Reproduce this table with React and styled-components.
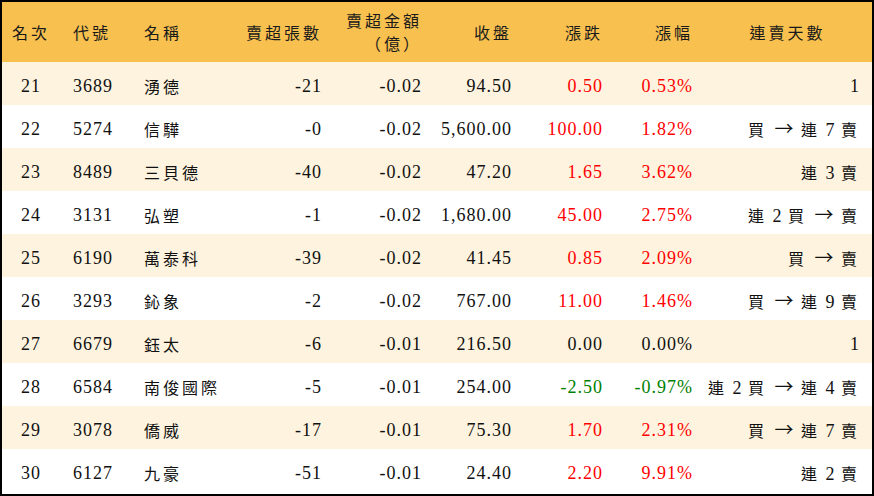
import React from "react";
import styled, { createGlobalStyle } from "styled-components";

const Global = createGlobalStyle`
  html, body { margin: 0; padding: 0; background: #fff; }
  #root { width: 874px; height: 496px; }
`;

const COLS = "58px 70px 100px 103px 100px 90px 90px 90px 169px";

const Board = styled.div`
  box-sizing: border-box;
  width: 874px;
  height: 496px;
  border: 2px solid #000;
  background: #fff;
  font-family: "Liberation Serif", "Noto Sans CJK TC", serif;
  font-size: 18px;
  letter-spacing: 1px;
  color: #111;
  display: flex;
  flex-direction: column;
`;

const HeadRow = styled.div`
  display: grid;
  grid-template-columns: ${COLS};
  height: 60px;
  background: #f7c04f;
`;

const Row = styled.div`
  display: grid;
  grid-template-columns: ${COLS};
  height: 43px;
  box-sizing: border-box;
  padding-top: 5px;
  background: ${(p) => (p.$shade ? "#fdf3de" : "#ffffff")};
  &:first-of-type {
    height: 45px;
    padding-top: 7px;
  }
`;

const justify = { left: "flex-start", center: "center", right: "flex-end" };

const HeadCell = styled.div`
  display: flex;
  flex-direction: column;
  justify-content: center;
  align-items: ${(p) => justify[p.$align]};
  text-align: ${(p) => p.$align};
  padding-left: ${(p) => p.$pl || 0}px;
  padding-right: ${(p) => p.$pr || 0}px;
  line-height: 23px;
  font-family: "Noto Sans CJK TC", serif;
  font-size: 16px;
  letter-spacing: 3px;
  color: #1a1a1a;
  white-space: nowrap;
  & > span { display: block; }
`;

const Cell = styled.div`
  display: flex;
  align-items: center;
  justify-content: ${(p) => justify[p.$align]};
  padding-left: ${(p) => p.$pl || 0}px;
  padding-right: ${(p) => p.$pr || 0}px;
  color: ${(p) => p.$tone || "#111"};
  white-space: pre;
`;

const Cjk = styled.span`
  font-family: "Noto Sans CJK TC", serif;
  font-size: 16px;
  letter-spacing: 3px;
`;

const Arrow = styled.span`
  font-family: "Noto Sans CJK TC", sans-serif;
  font-size: 19px;
  line-height: 1;
  letter-spacing: 0;
  margin: 0 2px;
`;

const Streak = styled.span`
  white-space: pre;
`;

const cols = [
  { key: "rank", align: "center" },
  { key: "code", align: "left", pl: 13 },
  { key: "name", align: "left", pl: 14 },
  { key: "vol", align: "right", pr: 11 },
  { key: "amt", align: "right", pr: 11 },
  { key: "close", align: "right", pr: 11 },
  { key: "chg", align: "right", pr: 10 },
  { key: "pct", align: "right", pr: 10 },
  { key: "days", align: "right", pr: 12, headAlign: "center" },
];

const heads = [
  ["名次"],
  ["代號"],
  ["名稱"],
  ["賣超張數"],
  ["賣超金額", "（億）"],
  ["收盤"],
  ["漲跌"],
  ["漲幅"],
  ["連賣天數"],
];

const data = [
  ["21", "3689", "湧德", "-21", "-0.02", "94.50", "0.50", "0.53%", "1"],
  ["22", "5274", "信驊", "-0", "-0.02", "5,600.00", "100.00", "1.82%", "買 → 連 7 賣"],
  ["23", "8489", "三貝德", "-40", "-0.02", "47.20", "1.65", "3.62%", "連 3 賣"],
  ["24", "3131", "弘塑", "-1", "-0.02", "1,680.00", "45.00", "2.75%", "連 2 買 → 賣"],
  ["25", "6190", "萬泰科", "-39", "-0.02", "41.45", "0.85", "2.09%", "買 → 賣"],
  ["26", "3293", "鈊象", "-2", "-0.02", "767.00", "11.00", "1.46%", "買 → 連 9 賣"],
  ["27", "6679", "鈺太", "-6", "-0.01", "216.50", "0.00", "0.00%", "1"],
  ["28", "6584", "南俊國際", "-5", "-0.01", "254.00", "-2.50", "-0.97%", "連 2 買 → 連 4 賣"],
  ["29", "3078", "僑威", "-17", "-0.01", "75.30", "1.70", "2.31%", "買 → 連 7 賣"],
  ["30", "6127", "九豪", "-51", "-0.01", "24.40", "2.20", "9.91%", "連 2 賣"],
];

const toneFor = (v) => {
  const n = parseFloat(v);
  if (n > 0) return "#ff0000";
  if (n < 0) return "#008000";
  return "#111";
};

const renderMixed = (text) => (
  <Streak>
    {text.split(/([\u4e00-\u9fff]+|→)/).map((part, i) =>
      part === "→" ? (
        <Arrow key={i}>{part}</Arrow>
      ) : /[\u4e00-\u9fff]/.test(part) ? (
        <Cjk key={i}>{part}</Cjk>
      ) : (
        part
      )
    )}
  </Streak>
);

export default function App() {
  return (
    <>
      <Global />
      <Board>
        <HeadRow>
          {heads.map((lines, i) => (
            <HeadCell
              key={i}
              $align={cols[i].headAlign || cols[i].align}
              $pl={cols[i].pl}
              $pr={cols[i].headAlign ? 0 : cols[i].pr}
            >
              {lines.map((l) => (
                <span key={l}>{l}</span>
              ))}
            </HeadCell>
          ))}
        </HeadRow>
        {data.map((r, idx) => (
          <Row key={r[0]} $shade={idx % 2 === 0}>
            {r.map((v, i) => (
              <Cell
                key={i}
                $align={cols[i].align}
                $pl={cols[i].pl}
                $pr={cols[i].pr}
                $tone={i === 6 || i === 7 ? toneFor(v) : undefined}
              >
                {i === 2 ? <Cjk>{v}</Cjk> : i === 8 ? renderMixed(v) : v}
              </Cell>
            ))}
          </Row>
        ))}
      </Board>
    </>
  );
}
